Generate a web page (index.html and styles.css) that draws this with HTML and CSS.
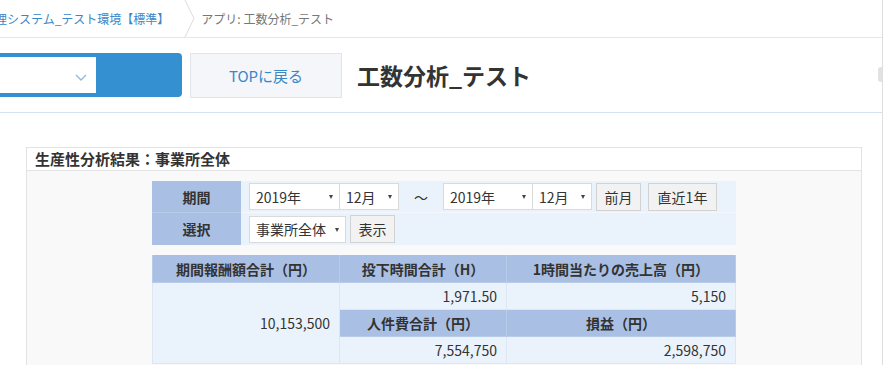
FILE: index.html
```html
<!DOCTYPE html>
<html lang="ja">
<head>
    <meta charset="UTF-8">
    <title>工数分析_テスト</title>
    <link rel="stylesheet" href="styles.css">
</head>
<body>
    <div class="page">
        <div class="crumbs">
            <a class="crumb-home">管理システム_テスト環境【標準】</a>
            <svg class="crumb-sep" width="12" height="37" viewBox="0 0 12 37">
                <polyline points="1,0 10,18.5 1,37" fill="none" stroke="#dcdcdc" stroke-width="1"/>
            </svg>
            <span class="crumb-cur">アプリ: 工数分析_テスト</span>
        </div>

        <div class="app-head">
            <div class="app-switch">
                <div class="app-select">
                    <svg width="12" height="8" viewBox="0 0 12 8">
                        <polyline points="1,1 6,6 11,1" fill="none" stroke="#8fb8dd" stroke-width="1.3"/>
                    </svg>
                </div>
            </div>
            <a class="top-btn">TOPに戻る</a>
            <h1>工数分析_テスト</h1>
        </div>

        <div class="main">
            <div class="panel">
                <div class="panel-title">生産性分析結果：事業所全体</div>
                <div class="panel-body">
                    <table class="cond">
                        <tr>
                            <th>期間</th>
                            <td>
                                <div class="row">
                                    <span class="sel w-year">2019年<i></i></span>
                                    <span class="sel w-month">12月<i></i></span>
                                    <span class="tilde">～</span>
                                    <span class="sel w-year2">2019年<i></i></span>
                                    <span class="sel w-month">12月<i></i></span>
                                    <span class="btn">前月</span>
                                    <span class="btn btn-wide">直近1年</span>
                                </div>
                            </td>
                        </tr>
                        <tr>
                            <th>選択</th>
                            <td>
                                <div class="row">
                                    <span class="sel w-office">事業所全体<i></i></span>
                                    <span class="btn">表示</span>
                                </div>
                            </td>
                        </tr>
                    </table>

                    <table class="result">
                        <tr class="r-head">
                            <th class="c1">期間報酬額合計（円）</th>
                            <th class="c2">投下時間合計（H）</th>
                            <th class="c3">1時間当たりの売上高（円）</th>
                        </tr>
                        <tr class="r-val">
                            <td rowspan="3">10,153,500</td>
                            <td>1,971.50</td>
                            <td>5,150</td>
                        </tr>
                        <tr class="r-head2">
                            <th>人件費合計（円）</th>
                            <th>損益（円）</th>
                        </tr>
                        <tr class="r-val2">
                            <td>7,554,750</td>
                            <td>2,598,750</td>
                        </tr>
                    </table>
                </div>
            </div>
        </div>

        <span class="scroll-nub"></span>
    </div>
</body>
</html>
```

FILE: styles.css
```css
body {
    margin: 0;
    background: #fff;
    color: #333;
    font-family: "Noto Sans CJK JP", "Noto Sans", sans-serif;
    overflow: hidden;
}

.page {
    position: relative;
    width: 882px;
    height: 365px;
    border-right: 1px solid #dedede;
    overflow: hidden;
}

/* パンくず */
.crumbs {
    display: flex;
    align-items: center;
    height: 37px;
    border-bottom: 1px solid #e6e6e6;
    font-size: 12px;
    line-height: 37px;
    white-space: nowrap;
}

.crumb-home {
    color: #3a87c8;
    margin-left: -17px;
}

.crumb-sep {
    display: block;
    margin: 0 5px 0 15px;
}

.crumb-cur {
    color: #777;
}

/* アプリヘッダー */
.app-head {
    display: flex;
    align-items: center;
    height: 74px;
    border-bottom: 1px solid #d3e1f0;
}

.app-switch {
    width: 182px;
    height: 44px;
    padding: 4px 0;
    box-sizing: border-box;
    background: #3590d2;
    border-radius: 0 4px 4px 0;
}

.app-select {
    display: flex;
    align-items: center;
    justify-content: flex-end;
    width: 96px;
    height: 36px;
    padding-right: 9px;
    padding-top: 6px;
    box-sizing: border-box;
    background: #fff;
}

.top-btn {
    display: flex;
    align-items: center;
    justify-content: center;
    width: 152px;
    height: 45px;
    margin-left: 8px;
    box-sizing: border-box;
    background: #f4f6f9;
    border: 1px solid #e1e5ea;
    color: #3a87c8;
    font-size: 15px;
}

h1 {
    margin: 0 0 0 15px;
    font-size: 23px;
    font-weight: bold;
    color: #333;
}

/* パネル */
.main {
    padding: 34px 20px 0 26px;
}

.panel-title {
    height: 22px;
    padding-left: 8px;
    border: 1px solid #e3e3e3;
    font-size: 15px;
    font-weight: bold;
    line-height: 21px;
}

.panel-body {
    padding: 10px 0 2px;
    background: #f9f9f9;
    border: 1px solid #e3e3e3;
    border-top: 0;
}

table {
    border-collapse: collapse;
    margin: 0 auto;
    font-size: 14px;
}

th {
    background: #a9c0e4;
    font-weight: bold;
    color: #333;
    text-align: center;
    padding: 0;
}

td {
    background: #eaf3fc;
    padding: 0;
}

/* 条件テーブル */
.cond {
    width: 584px;
    margin-bottom: 10px;
}

.cond th {
    width: 89px;
    height: 31px;
    border-bottom: 1px solid #b8cbe9;
}

.cond td {
    height: 31px;
    padding-left: 8px;
    border-bottom: 1px solid #f4f8fd;
}

.cond tr:last-child th,
.cond tr:last-child td {
    border-bottom: 0;
    height: 32px;
}

.row {
    display: flex;
    align-items: center;
}

.sel {
    display: inline-flex;
    align-items: center;
    justify-content: space-between;
    height: 27px;
    padding: 0 6px;
    box-sizing: border-box;
    background: #fff;
    border: 1px solid #dadada;
    font-size: 14px;
    line-height: 1;
}

/* セレクトの小さな三角 */
.sel i {
    width: 0;
    height: 0;
    margin-top: 1px;
    border-left: 2.5px solid transparent;
    border-right: 2.5px solid transparent;
    border-top: 4px solid #444;
}

.w-year { width: 91px; }
.w-year2 { width: 90px; }
.w-month { width: 60px; margin-left: -1px; }
.w-office { width: 97px; }

.tilde {
    width: 44px;
    text-align: center;
    font-size: 14px;
}

.btn {
    display: inline-flex;
    align-items: center;
    justify-content: center;
    width: 45px;
    height: 28px;
    margin-left: 4px;
    box-sizing: border-box;
    background: #f2f2f2;
    border: 1px solid #d2d2d2;
    font-size: 14px;
}

.btn-wide {
    width: 69px;
    margin-left: 7px;
}

/* 結果テーブル */
.result {
    width: 584px;
}

.result .c1 { width: 186px; }
.result .c2 { width: 166px; }

.result th {
    border: 1px solid #b8cbe9;
    border-top: 0;
}

.result td {
    text-align: right;
    padding-right: 9px;
    border: 1px solid #dde7f3;
}

.r-head th { height: 27px; }
.r-val td { height: 26px; }
.r-head2 th { height: 26px; }
.r-val2 td { height: 26px; }

.scroll-nub {
    position: absolute;
    top: 67px;
    right: 0;
    width: 4px;
    height: 15px;
    background: #e2e2e2;
    border-radius: 3px 0 0 3px;
}
```
